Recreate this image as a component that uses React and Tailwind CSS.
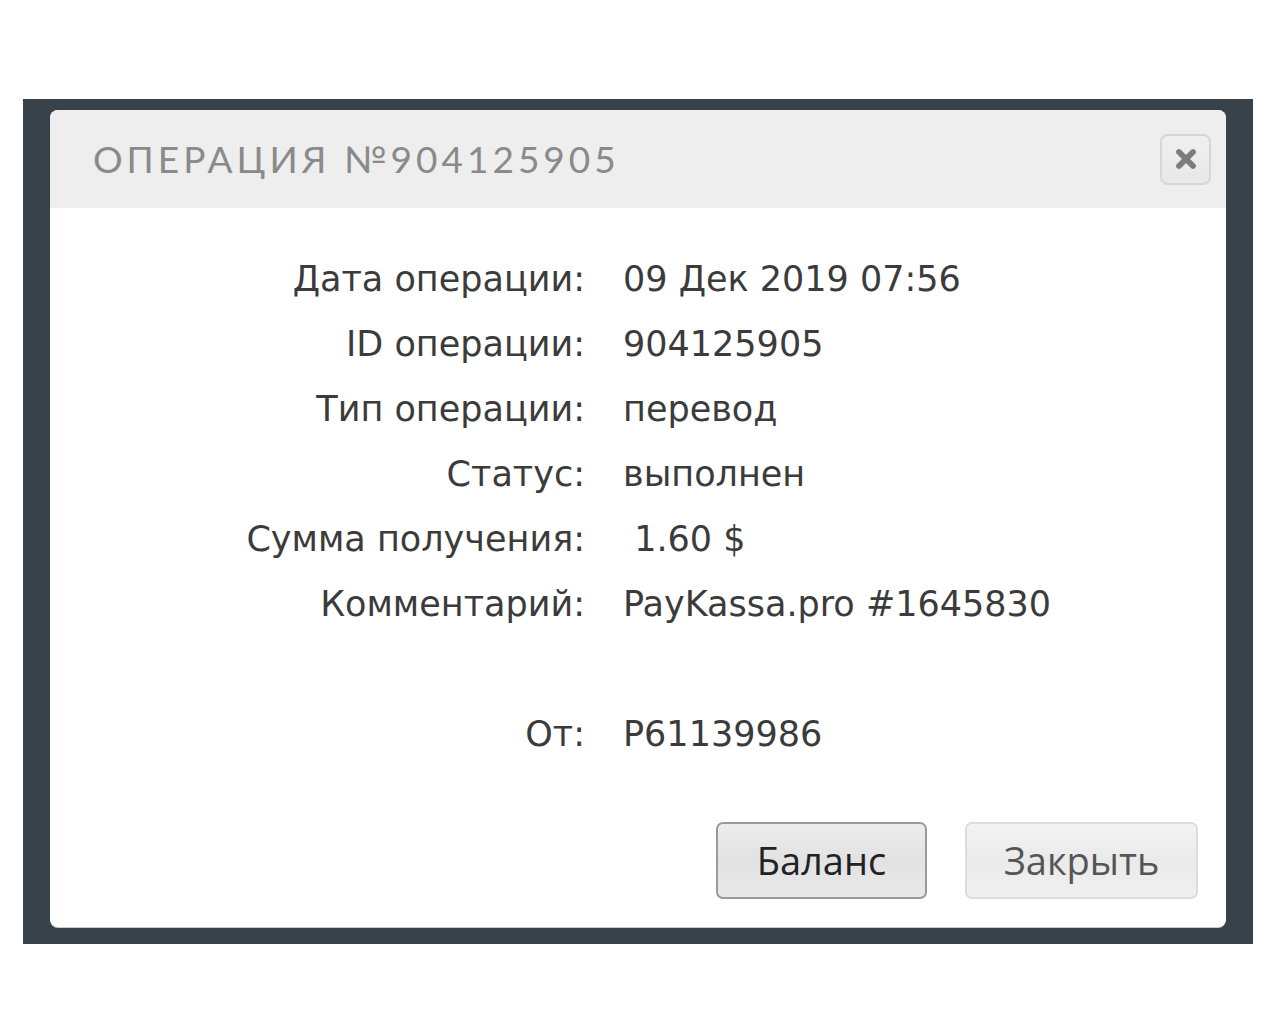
import { X } from 'lucide-react'

const rows = [
  ['Дата операции:', '09 Дек 2019 07:56'],
  ['ID операции:', '904125905'],
  ['Тип операции:', 'перевод'],
  ['Статус:', 'выполнен'],
  ['Сумма получения:', '\u00a01.60 $'],
  ['Комментарий:', 'PayKassa.pro #1645830'],
]

export default function App() {
  return (
    <div className="min-h-[1024px] bg-white pt-[99px] pl-[23px]" style={{ width: 1280 }}>
      <div className="w-[1230px] h-[845px] bg-[#37424a] pt-[11px] pl-[27px]">
        <div className="w-[1176px] h-[817px] bg-white rounded-[8px] overflow-hidden shadow-[0_1px_0_#ccc] flex flex-col">
          {/* Header */}
          <div className="h-[98px] bg-[#eeeeee] flex items-center justify-between pl-[43px] pr-[15px]">
            <h1 className="text-[37px] tracking-[4px] text-[#8a8a8a] font-['Lato',sans-serif] font-normal">
              ОПЕРАЦИЯ №904125905
            </h1>
            <button className="w-[51px] h-[51px] rounded-[8px] border-2 border-[#d6d6d6] bg-gradient-to-b from-[#f0f0f0] to-[#e8e8e8] flex items-center justify-center">
              <X size={28} strokeWidth={5} className="text-[#7c7c7c]" />
            </button>
          </div>

          {/* Body */}
          <div className="flex-1 flex flex-col pt-[39px] font-['DejaVu_Sans',sans-serif] text-[#3b3b3b] text-[35px]">
            {rows.map(([label, value]) => (
              <div key={label} className="flex h-[65px] items-center">
                <div className="w-[535px] text-right">{label}</div>
                <div className="pl-[38px]">{value}</div>
              </div>
            ))}
            <div className="flex h-[65px] items-center mt-[65px]">
              <div className="w-[535px] text-right">От:</div>
              <div className="pl-[38px]">P61139986</div>
            </div>

            <div className="flex justify-end gap-[38px] pr-[28px] mt-[55px]">
              <button className="w-[211px] h-[77px] rounded-[7px] border-2 border-[#9a9a9a] bg-gradient-to-b from-[#ededed] via-[#e2e2e2] to-[#e9e9e9] text-[38px] text-[#222] font-['Open_Sans',sans-serif]">
                Баланс
              </button>
              <button className="w-[233px] h-[77px] rounded-[7px] border-2 border-[#dcdcdc] bg-gradient-to-b from-[#f3f3f3] via-[#eaeaea] to-[#f0f0f0] text-[38px] text-[#555] font-['Open_Sans',sans-serif]">
                Закрыть
              </button>
            </div>
          </div>
        </div>
      </div>
    </div>
  )
}
